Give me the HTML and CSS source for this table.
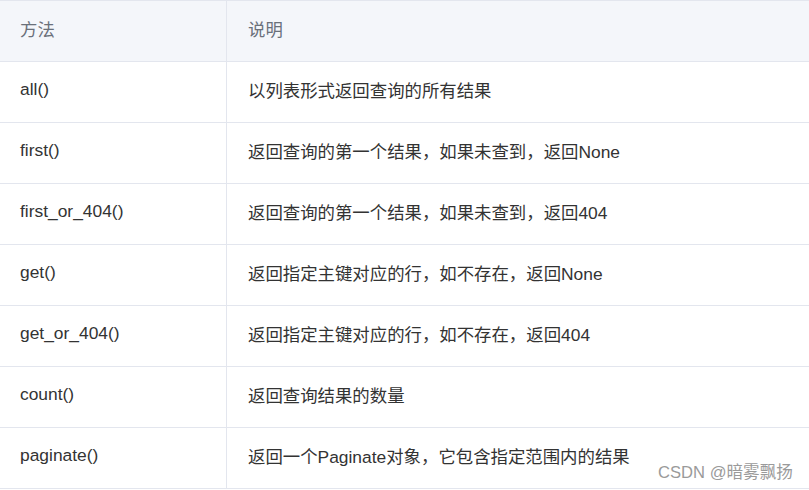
FILE: index.html
```html
<!DOCTYPE html>
<html lang="zh">
<head>
<meta charset="utf-8">
<link rel="stylesheet" href="styles.css">
</head>
<body>
<div class="wrap">
<table class="tbl">
  <thead>
    <tr><th class="c1">方法</th><th class="c2">说明</th></tr>
  </thead>
  <tbody>
    <tr><td class="c1">all()</td><td class="c2">以列表形式返回查询的所有结果</td></tr>
    <tr><td class="c1">first()</td><td class="c2">返回查询的第一个结果，如果未查到，返回None</td></tr>
    <tr><td class="c1">first_or_404()</td><td class="c2">返回查询的第一个结果，如果未查到，返回404</td></tr>
    <tr><td class="c1">get()</td><td class="c2">返回指定主键对应的行，如不存在，返回None</td></tr>
    <tr><td class="c1">get_or_404()</td><td class="c2">返回指定主键对应的行，如不存在，返回404</td></tr>
    <tr><td class="c1">count()</td><td class="c2">返回查询结果的数量</td></tr>
    <tr><td class="c1">paginate()</td><td class="c2">返回一个Paginate对象，它包含指定范围内的结果</td></tr>
  </tbody>
</table>
<div class="mark">CSDN @暗雾飘扬</div>
</div>
</body>
</html>
```
FILE: styles.css
```css
html, body { margin: 0; padding: 0; background: #fff; }
body {
  font-family: "Liberation Sans", Arial, "Noto Sans CJK SC", sans-serif;
  overflow: hidden;
}
.wrap { position: relative; width: 809px; height: 490px; overflow: hidden; }
.tbl {
  border-collapse: collapse;
  width: 812px;
  table-layout: fixed;
  font-size: 17.4px;
  color: #333;
}
.tbl th, .tbl td {
  height: 54px;
  padding: 0 0 6px 0;
  border-top: 1px solid #e3e6ee;
  border-bottom: 1px solid #e3e6ee;
  text-align: left;
  vertical-align: middle;
  font-weight: normal;
  white-space: nowrap;
}
.tbl th { background: #f4f6fa; color: #6a707a; }
.tbl .c1 { width: 206px; padding-left: 20px; border-right: 1px solid #e3e6ee; }
.tbl .c2 { padding-left: 21px; }
.mark {
  position: absolute;
  left: 658px;
  top: 459px;
  font-size: 16.6px;
  color: #9a9a9a;
  font-family: "Liberation Sans", Arial, "Noto Sans CJK SC", sans-serif;
}
```
